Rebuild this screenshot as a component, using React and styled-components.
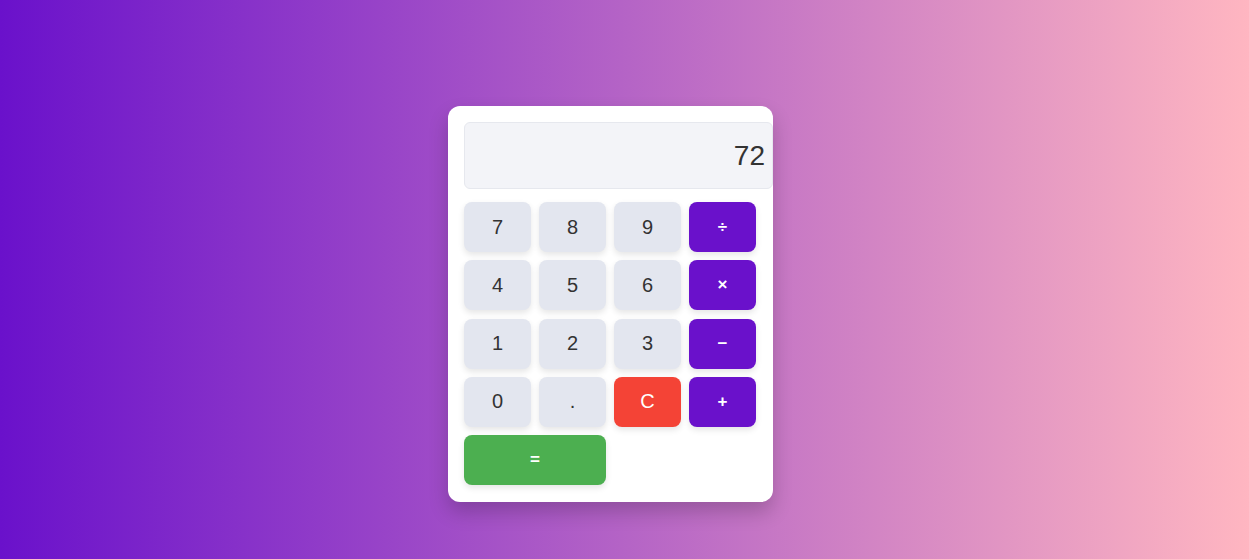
import React from 'react';
import styled, { createGlobalStyle } from 'styled-components';

const GlobalStyle = createGlobalStyle`
  html, body {
    margin: 0;
    padding: 0;
    height: 100%;
  }
  body {
    font-family: "Liberation Sans", Arial, sans-serif;
    background: linear-gradient(to right, #6a11cb, #ffb6c1);
    min-height: 559px;
  }
`;

const Page = styled.div`
  display: flex;
  align-items: flex-start;
  min-height: 559px;
  padding: 106px 0 0 448px;
  box-sizing: border-box;
`;

const Card = styled.div`
  width: 325px;
  box-sizing: border-box;
  padding: 16px 16px 17px;
  background: #ffffff;
  border-radius: 12px;
  box-shadow: 0 10px 20px rgba(0, 0, 0, 0.2);
`;

const Display = styled.div`
  width: 100%;
  box-sizing: content-box;
  padding: 17px 7px 16px;
  margin-bottom: 13px;
  border: 1px solid #e6e8ee;
  border-radius: 6px;
  background: #f3f4f8;
  color: #333333;
  font-size: 28px;
  line-height: 32px;
  text-align: right;
`;

const Keys = styled.div`
  display: grid;
  grid-template-columns: repeat(4, 67px);
  grid-auto-rows: 50px;
  column-gap: 8px;
  row-gap: 8.25px;
`;

const tones = {
  digit: { bg: '#e3e6ef', fg: '#333333', size: '20px' },
  op: { bg: '#6a11cb', fg: '#ffffff', size: '17px' },
  clear: { bg: '#f44336', fg: '#ffffff', size: '20px' },
  equals: { bg: '#4caf50', fg: '#ffffff', size: '17px' },
};

const Key = styled.button`
  grid-column: span ${props => props.$span || 1};
  border: none;
  border-radius: 8px;
  background: ${props => tones[props.$tone].bg};
  color: ${props => tones[props.$tone].fg};
  font-family: "Liberation Sans", Arial, sans-serif;
  font-size: ${props => tones[props.$tone].size};
  font-weight: ${props => (props.$tone === 'op' || props.$tone === 'equals' ? 700 : 400)};
  box-shadow: 0 3px 6px rgba(0, 0, 0, 0.1);
  cursor: pointer;
  padding: 0;
`;

const keys = [
  ['7', 'digit'], ['8', 'digit'], ['9', 'digit'], ['÷', 'op'],
  ['4', 'digit'], ['5', 'digit'], ['6', 'digit'], ['×', 'op'],
  ['1', 'digit'], ['2', 'digit'], ['3', 'digit'], ['−', 'op'],
  ['0', 'digit'], ['.', 'digit'], ['C', 'clear'], ['+', 'op'],
];

const App = () => (
  <Page>
    <GlobalStyle />
    <Card>
      <Display>72</Display>
      <Keys>
        {keys.map(([label, tone]) => (
          <Key key={label} $tone={tone}>{label}</Key>
        ))}
        <Key $tone="equals" $span={2}>=</Key>
      </Keys>
    </Card>
  </Page>
);

export default App;
